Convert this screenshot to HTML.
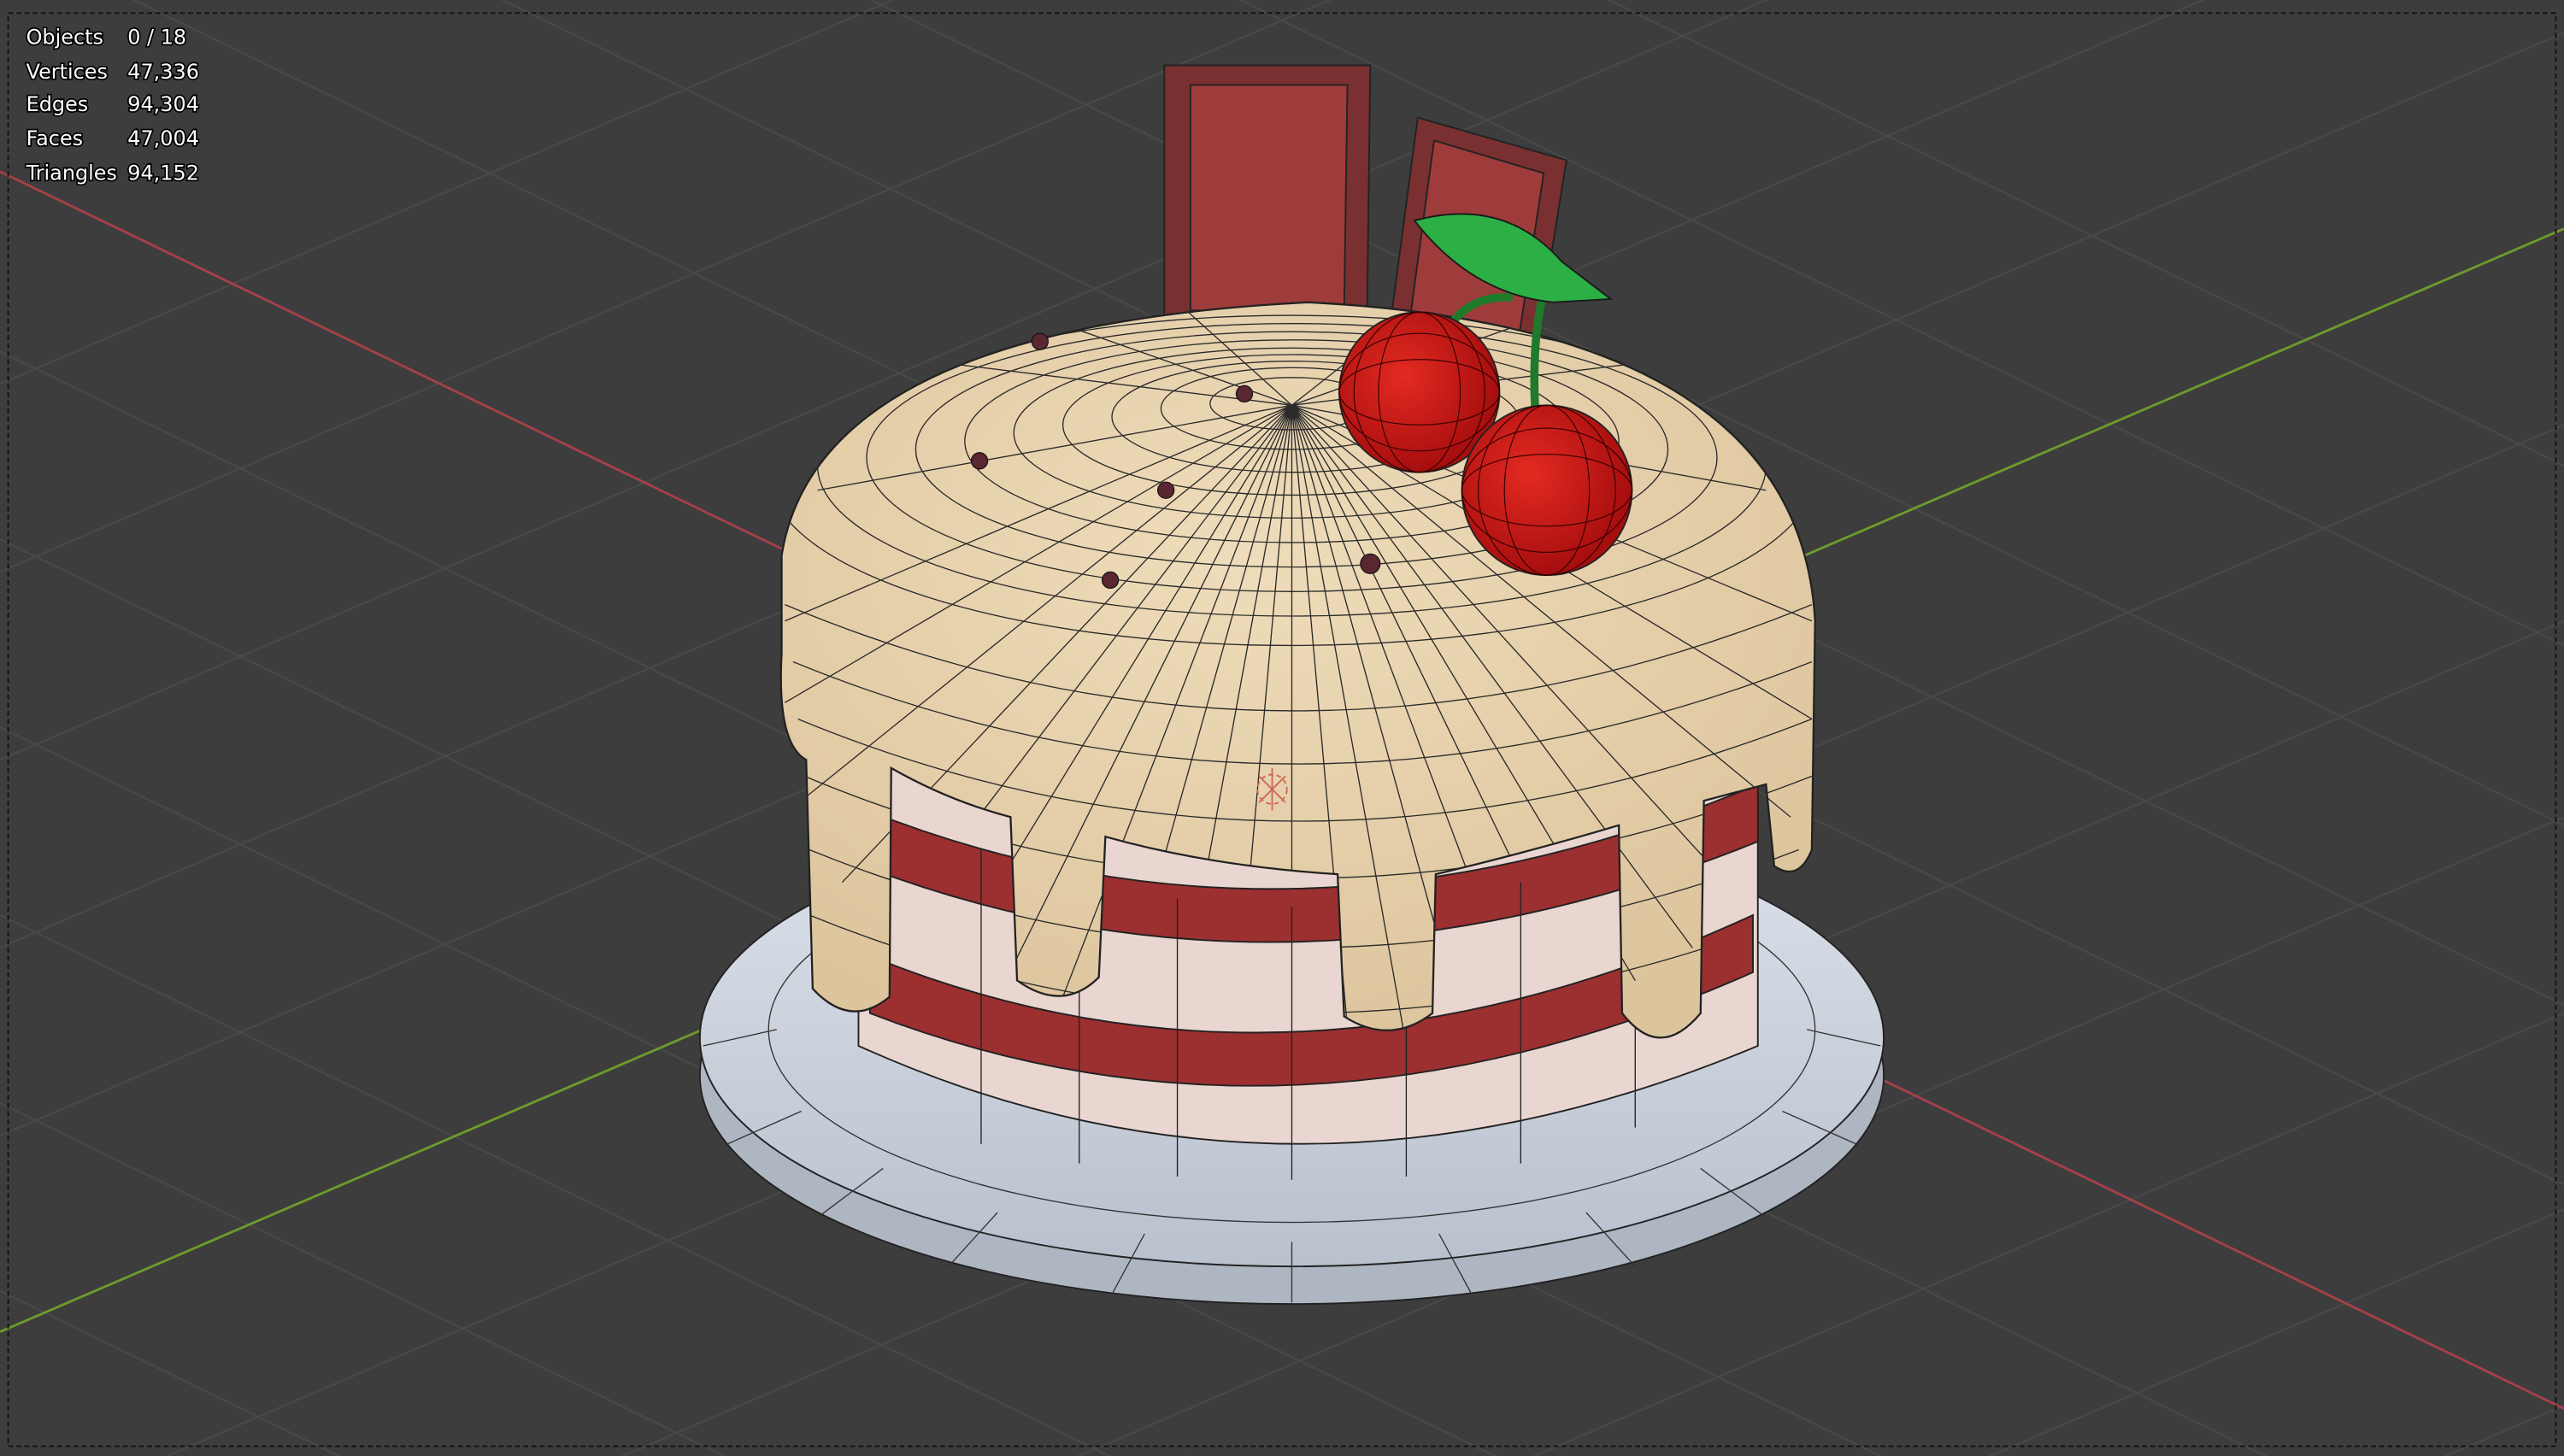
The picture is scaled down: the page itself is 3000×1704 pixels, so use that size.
<!DOCTYPE html>
<html><head><meta charset="utf-8"><style>
html,body{margin:0;padding:0;background:#3d3d3d;overflow:hidden;width:3000px;height:1704px}
svg{display:block}
.t{font-family:"DejaVu Sans","Liberation Sans",sans-serif;font-size:12.5px;fill:#fff;paint-order:stroke;stroke:#000;stroke-width:1.8px}
</style></head><body>
<svg width="3000" height="1704" viewBox="0 0 1568 891" preserveAspectRatio="none" xmlns="http://www.w3.org/2000/svg">
<defs>
<radialGradient id="fr" cx="0.45" cy="0.35" r="0.7"><stop offset="0" stop-color="#efdcba"/><stop offset="1" stop-color="#dcc49c"/></radialGradient>
<radialGradient id="ch" cx="0.4" cy="0.4" r="0.6"><stop offset="0" stop-color="#e42a22"/><stop offset="1" stop-color="#a60e0e"/></radialGradient>
<linearGradient id="pl" x1="0" y1="0" x2="0" y2="1"><stop offset="0" stop-color="#dde3ec"/><stop offset="1" stop-color="#b9c1cd"/></linearGradient>
<clipPath id="fc"><path d="M478,340 Q500,200 800,185 Q1100,200 1110,380 L1108,520 Q1100,540 1085,530 L1080,480 L1042,490 L1040,620 Q1015,650 992,620 L990,505 Q940,520 878,535 L876,620 Q850,640 822,622 L818,535 Q740,530 676,512 L672,598 Q650,620 622,600 L618,500 Q580,490 545,470 L544,610 Q520,630 497,605 L493,465 Q475,455 478,400Z"/></clipPath>
</defs>
<rect width="1568" height="891" fill="#3d3d3d"/>
<g stroke="#484848" stroke-width="1.2" fill="none">
<path d="M0,-480 L1568,285 M0,-370 L1568,395 M0,-260 L1568,505 M0,-150 L1568,615 M0,-40 L1568,725 M0,215 L1568,980 M0,330 L1568,1095 M0,445 L1568,1210 M0,560 L1568,1325 M0,675 L1568,1440 M0,790 L1568,1555"/>
<path d="M0,235 L1568,-440 M0,350 L1568,-325 M0,465 L1568,-210 M0,580 L1568,-95 M0,695 L1568,20 M0,935 L1568,260 M0,1055 L1568,380 M0,1175 L1568,500 M0,1295 L1568,620 M0,1415 L1568,740 M0,1535 L1568,860"/>
</g>
<line x1="0" y1="105" x2="1568" y2="862" stroke="#a5404a" stroke-width="1.5"/>
<line x1="0" y1="815" x2="1568" y2="140" stroke="#6e9a2c" stroke-width="1.5"/>
<rect x="5" y="8" width="1558" height="877" fill="none" stroke="#111" stroke-width="1" stroke-dasharray="3,2"/>
<text class="t" x="16" y="27">Objects</text><text class="t" x="78" y="27">0 / 18</text>
<text class="t" x="16" y="48">Vertices</text><text class="t" x="78" y="48">47,336</text>
<text class="t" x="16" y="68">Edges</text><text class="t" x="78" y="68">94,304</text>
<text class="t" x="16" y="89">Faces</text><text class="t" x="78" y="89">47,004</text>
<text class="t" x="16" y="110">Triangles</text><text class="t" x="78" y="110">94,152</text>
<!-- plate -->
<ellipse cx="790" cy="658" rx="362" ry="140" fill="#aeb6c2" stroke="#222" stroke-width="1"/>
<ellipse cx="790" cy="635" rx="362" ry="140" fill="url(#pl)" stroke="#222" stroke-width="1"/>
<ellipse cx="790" cy="630" rx="320" ry="118" fill="none" stroke="#333" stroke-width="0.7"/>
<g stroke="#333" stroke-width="0.7"><path d="M430,640 L475,630 M445,700 L490,680 M500,745 L540,715 M580,775 L610,742 M680,792 L700,755 M790,797 L790,760 M900,792 L880,755 M1000,775 L970,742 M1080,745 L1040,715 M1135,700 L1090,680 M1150,640 L1105,630"/></g>
<!-- chocolate bars -->
<path d="M712,40 L838,40 L836,195 L712,195Z" fill="#7a3030" stroke="#222"/>
<path d="M728,52 L824,52 L822,190 L728,190Z" fill="#9e3c3c" stroke="#222"/>
<path d="M867,72 L958,98 L935,240 L848,215Z" fill="#7a3030" stroke="#222"/>
<path d="M877,86 L944,106 L925,232 L860,212Z" fill="#9e3c3c" stroke="#222"/>
<!-- cake body -->
<path d="M525,470 L1075,470 L1075,640 Q790,760 525,640Z" fill="#e9d6d1" stroke="#222"/>
<path d="M528,495 Q790,600 1075,480 L1075,515 Q790,630 528,530Z" fill="#9c2f30" stroke="#222"/>
<path d="M532,585 Q790,690 1072,560 L1072,595 Q790,720 532,620Z" fill="#9c2f30" stroke="#222"/>
<g stroke="#222" stroke-width="0.7" fill="none">
<path d="M600,520 L600,700 M660,540 L660,712 M720,550 L720,720 M790,555 L790,722 M860,550 L860,720 M930,540 L930,712 M1000,520 L1000,690"/>
</g>
<!-- frosting -->
<path d="M478,340 Q500,200 800,185 Q1100,200 1110,380 L1108,520 Q1100,540 1085,530 L1080,480 L1042,490 L1040,620 Q1015,650 992,620 L990,505 Q940,520 878,535 L876,620 Q850,640 822,622 L818,535 Q740,530 676,512 L672,598 Q650,620 622,600 L618,500 Q580,490 545,470 L544,610 Q520,630 497,605 L493,465 Q475,455 478,400Z" fill="url(#fr)" stroke="#222" stroke-width="1.2"/>
<g stroke="#2a2a2a" stroke-width="0.7" fill="none" clip-path="url(#fc)">
<ellipse cx="790" cy="290" rx="320" ry="105"/>
<ellipse cx="790" cy="285" rx="290" ry="92"/>
<ellipse cx="790" cy="280" rx="260" ry="82"/>
<ellipse cx="790" cy="275" rx="230" ry="72"/>
<ellipse cx="790" cy="270" rx="200" ry="62"/>
<ellipse cx="790" cy="265" rx="170" ry="52"/>
<ellipse cx="790" cy="260" rx="140" ry="43"/>
<ellipse cx="790" cy="255" rx="110" ry="34"/>
<ellipse cx="790" cy="250" rx="80" ry="25"/>
<ellipse cx="790" cy="247" rx="50" ry="16"/>
<path d="M480,370 Q790,500 1108,370 M485,405 Q790,530 1108,405 M488,440 Q790,565 1108,440 M492,475 Q790,600 1108,475 M495,520 Q790,640 1100,520 M495,560 Q790,680 1100,560"/>
<path d="M790,248 L790,640 M790,248 L755,640 M790,248 L720,630 M790,248 L685,620 M790,248 L650,610 M790,248 L615,600 M790,248 L580,590 M790,248 L545,570 M790,248 L515,540 M790,248 L490,490 M790,248 L480,430 M790,248 L480,380 M790,248 L825,640 M790,248 L860,640 M790,248 L895,630 M790,248 L930,620 M790,248 L965,610 M790,248 L1000,600 M790,248 L1035,580 M790,248 L1065,550 M790,248 L1095,500 M790,248 L1108,440 M790,248 L1108,380 M790,248 L560,220 M790,248 L640,195 M790,248 L720,185 M790,248 L870,185 M790,248 L940,195 M790,248 L1020,220 M790,248 L500,300 M790,248 L1080,300"/>
</g>
<g fill="#5a2630" stroke="#111" stroke-width="0.6">
<circle cx="636" cy="209" r="5"/><circle cx="761" cy="241" r="5"/><circle cx="599" cy="282" r="5"/>
<circle cx="713" cy="300" r="5"/><circle cx="679" cy="355" r="5"/><circle cx="838" cy="345" r="6"/>
</g>
<g stroke="#d06a5a" fill="none" stroke-width="1"><circle cx="778" cy="483" r="9" stroke-dasharray="3,2"/><path d="M770,475 L786,491 M786,475 L770,491 M778,470 L778,496"/></g>
<!-- stems and leaf -->
<path d="M880,215 Q890,180 925,182 M940,268 Q935,210 945,175" stroke="#1f7a2a" stroke-width="5" fill="none"/>
<path d="M865,135 Q920,120 955,160 L985,183 L950,185 Q900,180 865,135Z" fill="#2cb046" stroke="#1a1a1a"/>
<!-- cherries -->
<circle cx="868" cy="240" r="49" fill="url(#ch)" stroke="#222"/>
<circle cx="946" cy="300" r="52" fill="url(#ch)" stroke="#222"/>
<g stroke="#330000" stroke-width="0.6" fill="none">
<ellipse cx="868" cy="240" rx="25" ry="49"/><ellipse cx="868" cy="240" rx="49" ry="20"/><ellipse cx="868" cy="240" rx="40" ry="49"/><ellipse cx="868" cy="240" rx="49" ry="36"/>
<ellipse cx="946" cy="300" rx="26" ry="52"/><ellipse cx="946" cy="300" rx="52" ry="22"/><ellipse cx="946" cy="300" rx="42" ry="52"/><ellipse cx="946" cy="300" rx="52" ry="38"/>
</g>
</svg>
</body></html>
